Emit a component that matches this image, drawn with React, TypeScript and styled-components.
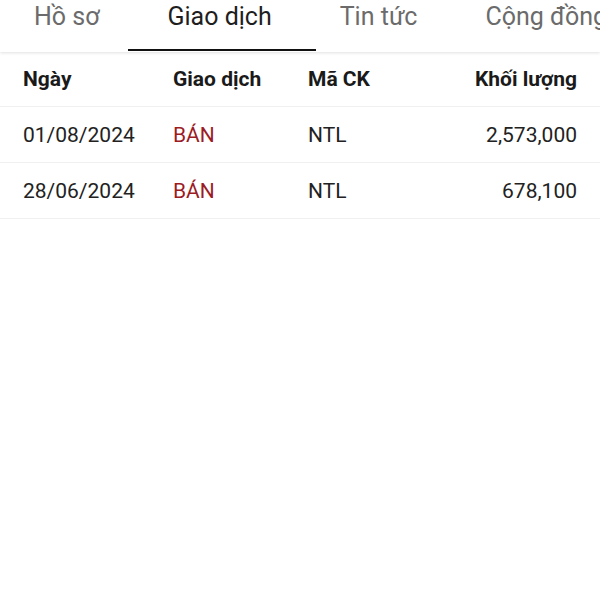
import React from "react";
import styled, { createGlobalStyle } from "styled-components";

const tabs = ["Hồ sơ", "Giao dịch", "Tin tức", "Cộng đồng"];
const activeTab = 1;

const trades = [
  { id: "1", date: "01/08/2024", type: "BÁN", code: "NTL", volume: "2,573,000" },
  { id: "2", date: "28/06/2024", type: "BÁN", code: "NTL", volume: "678,100" },
];

function App() {
  return (
    <Page>
      <GlobalStyle />
      <TabBar>
        <TabTrack>
          {tabs.map((tab, i) => (
            <Tab key={tab} $active={i === activeTab}>
              {tab}
            </Tab>
          ))}
        </TabTrack>
      </TabBar>

      <Table>
        <HeaderRow>
          <Cell>Ngày</Cell>
          <Cell>Giao dịch</Cell>
          <Cell>Mã CK</Cell>
          <Cell $right>Khối lượng</Cell>
        </HeaderRow>
        {trades.map((trade) => (
          <Row key={trade.id}>
            <Cell>{trade.date}</Cell>
            <Cell $sell>{trade.type}</Cell>
            <Cell>{trade.code}</Cell>
            <Cell $right>{trade.volume}</Cell>
          </Row>
        ))}
      </Table>
    </Page>
  );
}

export default App;

const GlobalStyle = createGlobalStyle`
  html, body {
    margin: 0;
    padding: 0;
    background: #ffffff;
  }
  body {
    font-family: Roboto, "Noto Sans", "Liberation Sans", sans-serif;
  }
`;

const Page = styled.div`
  width: 600px;
  height: 600px;
  overflow: hidden;
  background: #ffffff;
`;

const TabBar = styled.div`
  height: 52px;
  overflow: hidden;
  box-shadow: 0 1px 3px rgba(0, 0, 0, 0.12);
  position: relative;
  z-index: 1;
`;

const TabTrack = styled.div`
  display: flex;
  height: 100%;
`;

const Tab = styled.div<{ $active?: boolean }>`
  flex: none;
  position: relative;
  display: flex;
  align-items: flex-start;
  padding: 2px 34px 0;
  font-size: 25px;
  line-height: 30px;
  color: ${({ $active }) => ($active ? "#1e1e1e" : "#6b6b6b")};
  white-space: nowrap;

  &::after {
    content: "";
    display: ${({ $active }) => ($active ? "block" : "none")};
    position: absolute;
    left: -6px;
    right: -10px;
    bottom: 1px;
    height: 2px;
    background: #111111;
  }
`;

const Table = styled.div`
  display: flex;
  flex-direction: column;
`;

const Row = styled.div`
  display: grid;
  grid-template-columns: 150px 135px 1fr auto;
  align-items: center;
  height: 55px;
  padding: 0 23px;
  border-bottom: 1px solid #f0f0f0;
  font-size: 21px;
  color: #222222;
`;

const HeaderRow = styled(Row)`
  height: 54px;
  font-weight: 700;
  color: #1a1a1a;
`;

const Cell = styled.div<{ $right?: boolean; $sell?: boolean }>`
  text-align: ${({ $right }) => ($right ? "right" : "left")};
  color: ${({ $sell }) => ($sell ? "#9b1c24" : "inherit")};
  white-space: nowrap;
`;
